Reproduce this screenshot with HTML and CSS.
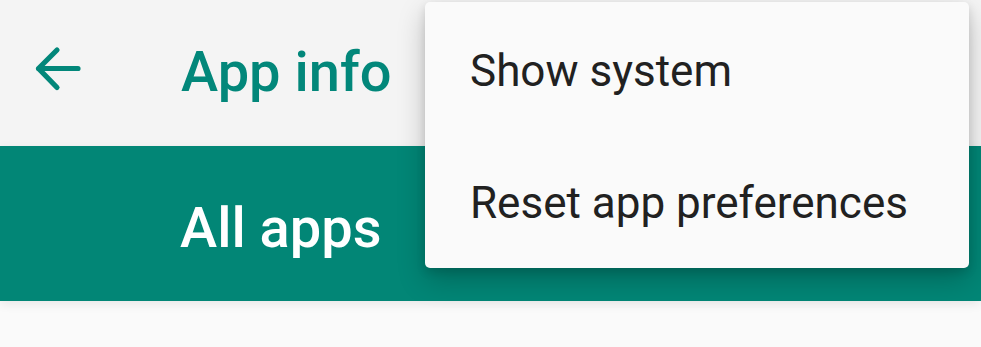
FILE: index.html
```html
<!DOCTYPE html>
<html>
<head>
<meta charset="utf-8">
<link rel="stylesheet" href="styles.css">
</head>
<body>
<div class="screen">
  <header class="toolbar">
    <button class="back" aria-label="Back">
      <svg width="52" height="52" viewBox="0 0 52 52">
        <path d="M47 25.5H7.5M7.5 25.5L26 7M7.5 25.5L26 44.5" fill="none" stroke="#02877a" stroke-width="5.2" stroke-linecap="round" stroke-linejoin="round"/>
      </svg>
    </button>
    <h1 class="title">App info</h1>
  </header>
  <div class="subbar">
    <span class="subtitle">All apps</span>
  </div>
  <div class="content"></div>
  <ul class="menu">
    <li class="menu-item">Show system</li>
    <li class="menu-item">Reset app preferences</li>
  </ul>
</div>
</body>
</html>
```

FILE: styles.css
```css
html, body {
  margin: 0;
  padding: 0;
}
body {
  font-family: Roboto, "Noto Sans", sans-serif;
  background: #fafafa;
  width: 981px;
  height: 347px;
  overflow: hidden;
}
.screen {
  position: relative;
  width: 981px;
  height: 347px;
  display: flex;
  flex-direction: column;
}
.toolbar {
  height: 146px;
  box-sizing: border-box;
  background: #f4f4f4;
  display: flex;
  align-items: center;
  padding-bottom: 8px;
  flex: none;
}
.back {
  border: 0;
  background: none;
  padding: 0;
  margin-left: 31px;
  width: 52px;
  height: 52px;
  display: flex;
}
.title {
  margin: 0 0 0 98px;
  font-size: 56px;
  font-weight: 500;
  color: #02877a;
  letter-spacing: 0;
  line-height: 1;
  position: relative;
  top: 3px;
}
.subbar {
  height: 155px;
  background: #028676;
  display: flex;
  align-items: center;
  flex: none;
  box-shadow: 0 3px 10px rgba(0,0,0,0.08);
  position: relative;
  z-index: 1;
}
.subtitle {
  margin-left: 180px;
  font-size: 56px;
  font-weight: 500;
  color: #ffffff;
  line-height: 1;
  position: relative;
  top: 4px;
}
.content {
  flex: 1;
  background: #fafafa;
}
.menu {
  position: absolute;
  left: 425px;
  top: 2px;
  width: 544px;
  height: 266px;
  margin: 0;
  padding: 0;
  list-style: none;
  background: #fafafa;
  border-radius: 5px;
  box-shadow: 0 12px 28px rgba(0,0,0,0.22), 0 4px 10px rgba(0,0,0,0.12);
  z-index: 2;
  display: flex;
  flex-direction: column;
}
.menu-item {
  flex: 1;
  display: flex;
  align-items: center;
  padding-left: 45px;
  font-size: 44px;
  color: #212121;
  line-height: 1;
}
.menu-item:first-child {
  padding-top: 4px;
}
.menu-item:last-child {
  padding-top: 3px;
}
```
